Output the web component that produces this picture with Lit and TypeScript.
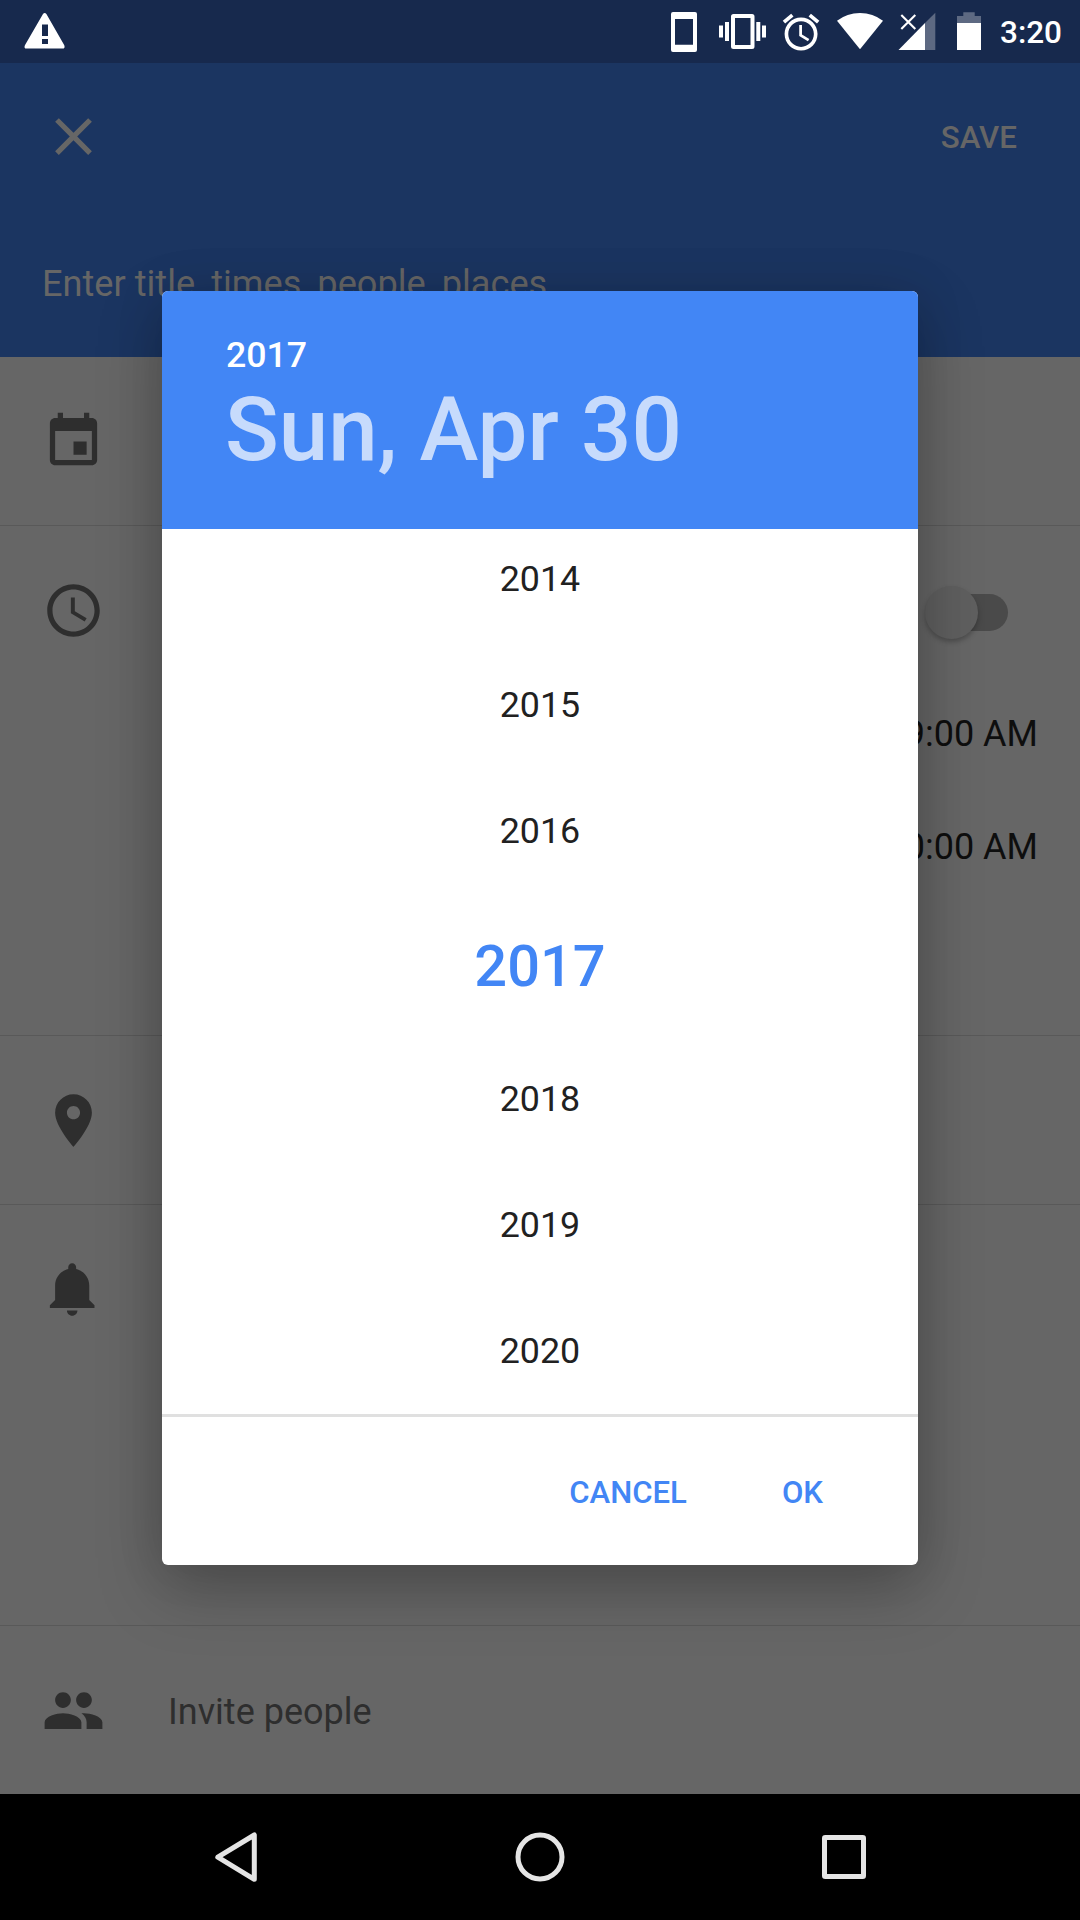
import { LitElement, html, css, svg } from "lit";
import { customElement } from "lit/decorators.js";

const icons = {
  close: svg`<path d="M19 6.41L17.59 5 12 10.59 6.41 5 5 6.41 10.59 12 5 17.59 6.41 19 12 13.41 17.59 19 19 17.59 13.41 12z"/>`,
  event: svg`<path d="M17 12h-5v5h5v-5zM16 1v2H8V1H6v2H5c-1.11 0-1.99.9-1.99 2L3 19c0 1.1.89 2 2 2h14c1.1 0 2-.9 2-2V5c0-1.1-.9-2-2-2h-1V1h-2zm3 18H5V8h14v11z"/>`,
  clock: svg`<path d="M11.99 2C6.47 2 2 6.48 2 12s4.47 10 9.99 10C17.52 22 22 17.52 22 12S17.52 2 11.99 2zM12 20c-4.42 0-8-3.58-8-8s3.58-8 8-8 8 3.58 8 8-3.58 8-8 8zm.5-13H11v6l5.25 3.15.75-1.23-4.5-2.67z"/>`,
  place: svg`<path d="M12 2C8.13 2 5 5.13 5 9c0 5.25 7 13 7 13s7-7.75 7-13c0-3.87-3.13-7-7-7zm0 9.5c-1.38 0-2.5-1.12-2.5-2.5s1.12-2.5 2.5-2.5 2.5 1.12 2.5 2.5-1.12 2.5-2.5 2.5z"/>`,
  bell: svg`<path d="M11.5 22c1.1 0 2-.9 2-2h-4c0 1.1.9 2 2 2zm6.5-6v-5.5c0-3.07-2.13-5.64-5-6.32V3.5c0-.83-.67-1.5-1.5-1.5S10 2.67 10 3.5v.68c-2.87.68-5 3.25-5 6.32V16l-2 2v1h17v-1l-2-2z"/>`,
  people: svg`<path d="M16 11c1.66 0 2.99-1.34 2.99-3S17.66 5 16 5c-1.66 0-3 1.34-3 3s1.34 3 3 3zm-8 0c1.66 0 2.99-1.34 2.99-3S9.66 5 8 5C6.34 5 5 6.34 5 8s1.34 3 3 3zm0 2c-2.33 0-7 1.17-7 3.5V19h14v-2.5c0-2.33-4.67-3.5-7-3.5zm8 0c-.29 0-.62.02-.97.05 1.16.84 1.97 1.97 1.97 3.45V19h6v-2.5c0-2.33-4.67-3.5-7-3.5z"/>`,
};

const icon = (name: keyof typeof icons) =>
  html`<svg class="icon" width="63" height="63" viewBox="0 0 24 24">${icons[name]}</svg>`;

@customElement("status-bar")
class StatusBar extends LitElement {
  static styles = css`
    :host {
      display: flex;
      align-items: center;
      height: 63px;
      box-sizing: border-box;
      padding-right: 18px;
      background: #17294d;
      color: #fff;
      fill: #fff;
    }
    svg { display: block; flex: none; }
    .spacer { flex: 1; }
    .line { fill: none; stroke: #fff; }
    .faint { opacity: 0.3; }
    .time {
      flex: none;
      font: 500 31.5px/63px Roboto, sans-serif;
      width: 72px;
      text-align: right;
      padding-top: 2px;
    }
  `;
  render() {
    return html`
      <svg width="90" height="63" viewBox="0 0 90 63">
        <path fill-rule="evenodd" d="M43 14Q44.7 11.8 46.4 14L64.3 45.2Q65.4 48.6 62.5 48.6H26.5Q23.6 48.6 24.9 45.2ZM42 24.5V36H48V24.5ZM42 39V44H48V39Z"/>
      </svg>
      <span class="spacer"></span>
      <svg width="48" height="63" viewBox="660 0 48 63">
        <path fill-rule="evenodd" d="M673 12H695Q697 12 697 14V50Q697 52 695 52H673Q671 52 671 50V14Q671 12 673 12ZM675 19V44.7H693V19Z"/>
      </svg>
      <svg width="67" height="63" viewBox="708 0 67 63">
        <path fill-rule="evenodd" d="M733.5 14H752Q754.5 14 754.5 16.5V46.5Q754.5 49 752 49H733.5Q731 49 731 46.5V16.5Q731 14 733.5 14ZM735 18V45H750.5V18Z"/>
        <path d="M719 25.5h4v12h-4zM725 22h4v19h-4zM756.3 22h4v19h-4zM762 25.5h4v12h-4z"/>
      </svg>
      <svg width="53" height="63" viewBox="775 0 53 63">
        <path transform="translate(779.1 10.3) scale(1.83)" d="M22 5.72l-4.6-3.86-1.29 1.53 4.6 3.86L22 5.72zM7.88 3.39L6.6 1.86 2 5.71l1.29 1.53 4.59-3.85zM12.5 8H11v6l4.75 2.85.75-1.23-4-2.37V8zM12 4c-4.97 0-9 4.03-9 9s4.02 9 9 9c4.97 0 9-4.03 9-9s-4.03-9-9-9zm0 16c-3.87 0-7-3.13-7-7s3.13-7 7-7 7 3.13 7 7-3.13 7-7 7z"/>
      </svg>
      <svg width="62" height="63" viewBox="828 0 62 63">
        <path d="M860 49.2L837 20.8Q847 13 860 13T883 20.8Z"/>
      </svg>
      <svg width="55" height="63" viewBox="890 0 55 63">
        <path class="faint" d="M925 23V50H935.3V12.7Z"/>
        <path d="M898.5 50L925 23V50Z"/>
        <path class="line" stroke-width="2.1" d="M901.3 15L915.3 29M915.3 15L901.3 29"/>
      </svg>
      <svg width="45" height="63" viewBox="945 0 45 63">
        <path class="faint" d="M957 23V16H963.3V12.2H974.7V16H981V23Z"/>
        <path d="M957 23H981V50H957Z"/>
      </svg>
      <span class="time">3:20</span>
    `;
  }
}

@customElement("event-form")
class EventForm extends LitElement {
  static styles = css`
    :host {
      display: flex;
      flex-direction: column;
      height: 1731px;
      background: #666;
      font: 400 36px/42px Roboto, sans-serif;
      color: #2e2e2e;
    }
    .head {
      height: 294px;
      box-sizing: border-box;
      background: #1b3561;
      color: #666;
      padding: 42px 63px 0 42px;
    }
    .bar {
      display: flex;
      align-items: center;
      justify-content: space-between;
      height: 63px;
    }
    .icon { display: block; flex: none; fill: currentColor; }
    .save { font-size: 31.3px; font-weight: 500; padding-top: 2px; }
    .title { padding-top: 95px; white-space: nowrap; font-size: 36.15px; }
    .row {
      display: flex;
      flex: none;
      align-items: flex-start;
      gap: 63px;
      height: 115.5px;
      padding: 52.5px 42px 0;
      border-bottom: 1px solid #595959;
    }
    .row.when { height: 456.5px; }
    .row.alerts { height: 367.5px; }
    .row.last { border-bottom: 0; }
    .label { padding-top: 12px; }
    .times {
      flex: 1;
      display: flex;
      flex-direction: column;
      align-items: flex-end;
      color: #0e0e0e;
    }
    .toggle {
      display: flex;
      align-items: center;
      width: 71px;
      height: 37px;
      margin: 15.5px 30px 0 0;
      border-radius: 19px;
      background: #4a4a4a;
    }
    .thumb {
      flex: none;
      width: 53px;
      height: 53px;
      margin-left: -12px;
      border-radius: 50%;
      background: #5f5f5f;
      box-shadow: 0 3px 5px rgba(0, 0, 0, 0.25);
    }
    .start { padding-top: 82px; }
    .end { padding-top: 71px; }
  `;
  render() {
    return html`
      <div class="head">
        <div class="bar">${icon("close")}<span class="save">SAVE</span></div>
        <div class="title">Enter title, times, people, places</div>
      </div>
      <div class="row">${icon("event")}</div>
      <div class="row when">
        ${icon("clock")}
        <div class="times">
          <div class="toggle"><div class="thumb"></div></div>
          <div class="start">9:00 AM</div>
          <div class="end">10:00 AM</div>
        </div>
      </div>
      <div class="row">${icon("place")}</div>
      <div class="row alerts">${icon("bell")}</div>
      <div class="row last">${icon("people")}<span class="label">Invite people</span></div>
    `;
  }
}

@customElement("year-dialog")
class YearDialog extends LitElement {
  static styles = css`
    :host {
      display: flex;
      flex-direction: column;
      width: 756px;
      height: 1274px;
      border-radius: 6px;
      overflow: hidden;
      background: #fff;
      font-family: Roboto, sans-serif;
      box-shadow: 0 24px 64px rgba(0, 0, 0, 0.25), 0 0 50px rgba(0, 0, 0, 0.1);
    }
    .head {
      flex: none;
      height: 238px;
      box-sizing: border-box;
      padding: 43px 63px 0;
      background: #4286f5;
      color: #fff;
      font-weight: 500;
    }
    .year { font-size: 35.7px; line-height: 42px; padding-left: 1px; }
    .date { font-size: 88.8px; line-height: 108px; color: #c7dbfc; white-space: nowrap; }
    .list {
      display: flex;
      flex-direction: column;
      justify-content: flex-end;
      height: 885px;
      flex: none;
      overflow: hidden;
    }
    .item {
      flex: none;
      height: 126px;
      line-height: 126px;
      text-align: center;
      font-size: 35.8px;
      color: #212121;
    }
    .item.on {
      height: 142px;
      line-height: 144px;
      font-size: 57.75px;
      font-weight: 500;
      color: #4286f5;
    }
    .actions {
      flex: 1;
      display: flex;
      justify-content: flex-end;
      gap: 95px;
      padding: 55px 95px 0 0;
      border-top: 3px solid #e0e0e0;
      color: #4286f5;
      font-size: 31.1px;
      line-height: 42px;
      font-weight: 500;
    }
  `;
  render() {
    const years = [2014, 2015, 2016, 2017, 2018, 2019, 2020];
    return html`
      <div class="head">
        <div class="year">2017</div>
        <div class="date">Sun, Apr 30</div>
      </div>
      <div class="list">
        ${years.map((y) => html`<div class="item ${y === 2017 ? "on" : ""}">${y}</div>`)}
      </div>
      <div class="actions"><span>CANCEL</span><span>OK</span></div>
    `;
  }
}

@customElement("nav-bar")
class NavBar extends LitElement {
  static styles = css`
    :host {
      display: flex;
      justify-content: space-between;
      align-items: center;
      height: 126px;
      box-sizing: border-box;
      padding: 0 204px;
      background: #000;
    }
    svg {
      display: block;
      fill: none;
      stroke: #e5e5e5;
      stroke-width: 5;
      stroke-linejoin: round;
    }
  `;
  render() {
    return html`
      <svg width="64" height="64" viewBox="204 1825 64 64"><path d="M217.8 1857.2L254.3 1835V1879.3Z"/></svg>
      <svg width="64" height="64" viewBox="508 1825 64 64"><circle cx="540" cy="1857" r="22"/></svg>
      <svg width="64" height="64" viewBox="812 1825 64 64"><rect x="824.5" y="1837.5" width="39" height="39" rx="0.8"/></svg>
    `;
  }
}

@customElement("app-root")
class AppRoot extends LitElement {
  static styles = css`
    :host {
      display: block;
      position: relative;
      width: 1080px;
      height: 1920px;
      overflow: hidden;
      background: #000;
    }
    .dialog {
      position: absolute;
      left: 162px;
      top: 291px;
    }
  `;
  render() {
    return html`
      <status-bar></status-bar>
      <event-form></event-form>
      <nav-bar></nav-bar>
      <year-dialog class="dialog"></year-dialog>
    `;
  }
}
